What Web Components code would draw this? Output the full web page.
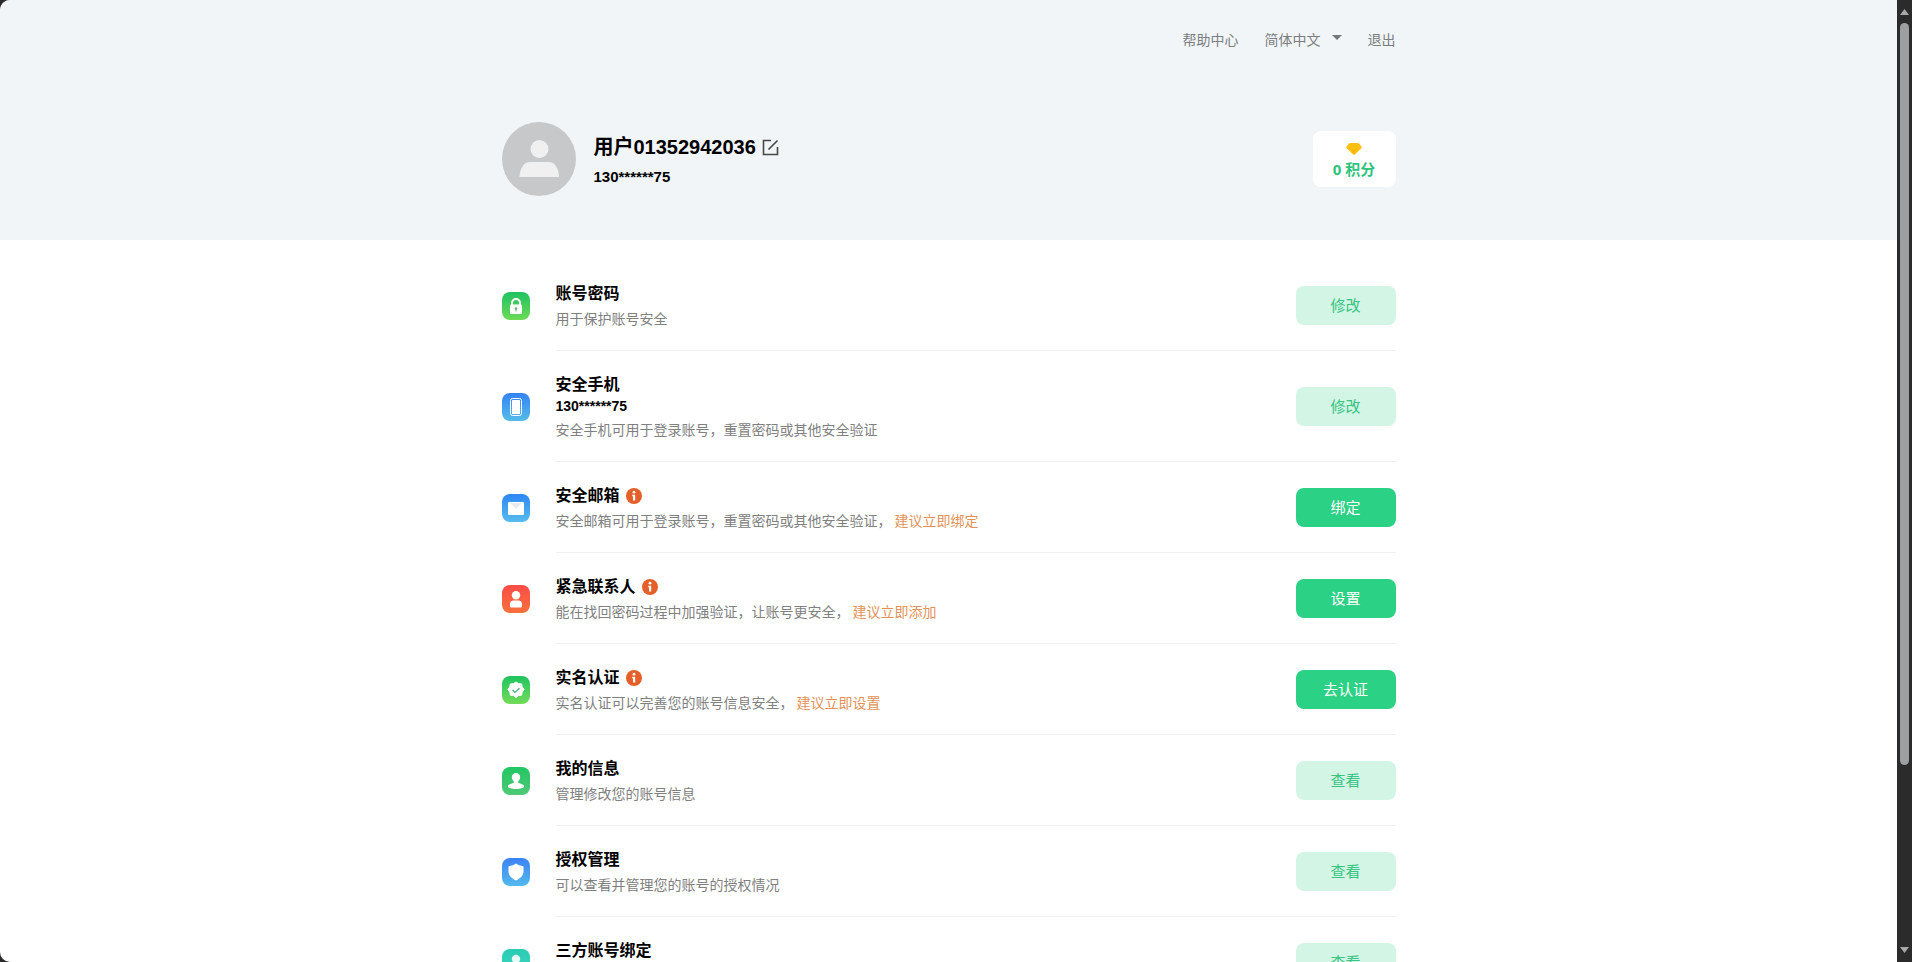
<!DOCTYPE html>
<html lang="zh-CN">
<head>
<meta charset="UTF-8">
<meta name="viewport" content="width=device-width, initial-scale=1">
<title>账号中心</title>
<style>
  html, body { height: 100%; }
  body {
    margin: 0;
    overflow: hidden;
    background: #2b2b2b;
    color: #000;
    font-family: "Liberation Sans", "Noto Sans CJK SC", sans-serif;
    font-size: 14px;
  }
</style>
</head>
<body>
<account-page>
  <account-header slot="header">
    <top-nav></top-nav>
    <user-profile name="用户01352942036" phone="130******75" points="0"></user-profile>
  </account-header>

  <setting-row icon="lock" heading="账号密码" action="修改">用于保护账号安全</setting-row>
  <setting-row icon="phone" heading="安全手机" value="130******75" action="修改">安全手机可用于登录账号，重置密码或其他安全验证</setting-row>
  <setting-row icon="mail" heading="安全邮箱" action="绑定" hint="建议立即绑定" primary>安全邮箱可用于登录账号，重置密码或其他安全验证，</setting-row>
  <setting-row icon="contact" heading="紧急联系人" action="设置" hint="建议立即添加" primary>能在找回密码过程中加强验证，让账号更安全，</setting-row>
  <setting-row icon="verify" heading="实名认证" action="去认证" hint="建议立即设置" primary>实名认证可以完善您的账号信息安全，</setting-row>
  <setting-row icon="profile" heading="我的信息" action="查看">管理修改您的账号信息</setting-row>
  <setting-row icon="shield" heading="授权管理" action="查看">可以查看并管理您的账号的授权情况</setting-row>
  <setting-row icon="link" heading="三方账号绑定" action="查看"></setting-row>
</account-page>

<script>
class AccountPage extends HTMLElement {
  constructor() {
    super();
    this.attachShadow({ mode: 'open' });
    this.shadowRoot.innerHTML = `
      <style>
        :host { display: flex; height: 100vh; }
        .view {
          flex: 1;
          min-width: 0;
          overflow: hidden;
          background: #fff;
          border-radius: 10px 0 0 10px;
        }
        main {
          max-width: 894px;
          margin: 0 auto;
          padding-top: 20px;
        }
      </style>
      <div class="view">
        <slot name="header"></slot>
        <main><slot></slot></main>
      </div>
      <scroll-rail></scroll-rail>
    `;
  }
}

class AccountHeader extends HTMLElement {
  constructor() {
    super();
    this.attachShadow({ mode: 'open' });
    this.shadowRoot.innerHTML = `
      <style>
        :host { display: block; background: #f1f5f8; }
        header { max-width: 894px; margin: 0 auto; }
      </style>
      <header><slot></slot></header>
    `;
  }
}

class TopNav extends HTMLElement {
  constructor() {
    super();
    this.attachShadow({ mode: 'open' });
    this.shadowRoot.innerHTML = `
      <style>
        :host { display: block; color: #7b7e80; }
        nav {
          display: flex;
          justify-content: flex-end;
          align-items: center;
          gap: 26px;
          height: 80px;
          line-height: 20px;
        }
        a { color: inherit; text-decoration: none; }
        .lang { display: grid; align-items: center; }
        .lang > * { grid-area: 1 / 1; }
        .lang svg { justify-self: end; pointer-events: none; margin-bottom: 5px; }
        select {
          appearance: none;
          border: 0;
          margin: 0;
          padding: 0 21px 0 0;
          background: none;
          color: inherit;
          font: inherit;
          line-height: 20px;
        }
      </style>
      <nav>
        <a href="#help">帮助中心</a>
        <label class="lang">
          <select aria-label="语言"><option>简体中文</option></select>
          <svg width="10" height="5" viewBox="0 0 10 5"><path d="M0 0h10L5 5z" fill="#73787b"/></svg>
        </label>
        <a href="#logout">退出</a>
      </nav>
    `;
  }
}

class UserProfile extends HTMLElement {
  constructor() {
    super();
    this.attachShadow({ mode: 'open' });
  }

  connectedCallback() {
    const name = this.getAttribute('name') || '';
    const phone = this.getAttribute('phone') || '';
    const points = this.getAttribute('points') || '0';

    this.shadowRoot.innerHTML = `
      <style>
        :host {
          display: flex;
          align-items: center;
          gap: 18px;
          padding: 42px 0 44px;
        }
        .avatar { flex: none; display: block; }
        .info { flex: 1; display: flex; flex-direction: column; gap: 6px; padding-top: 2px; }
        h1 {
          display: flex;
          align-items: center;
          gap: 6px;
          margin: 0;
          font-size: 20px;
          line-height: 28px;
        }
        h1 button { display: flex; padding: 0; border: 0; background: none; cursor: pointer; }
        .phone { font-size: 15px; font-weight: bold; line-height: 20px; }
        .points {
          display: flex;
          flex-direction: column;
          align-items: center;
          gap: 4px;
          box-sizing: border-box;
          width: 83px;
          padding: 12px 0 8px;
          border-radius: 8px;
          background: #fff;
          color: #2fc47e;
          font-family: "Open Sans", "Noto Sans CJK SC", sans-serif;
          font-size: 15px;
          font-weight: bold;
          line-height: 20px;
        }
      </style>
      <svg class="avatar" width="74" height="74" viewBox="0 0 74 74">
        <circle cx="37" cy="37" r="37" fill="#c6c8c9"/>
        <circle cx="37.500" cy="27" r="9" fill="#f0f0f0"/>
        <path d="M17.500 55C18 46 22 40 28 40H47C53 40 56.500 46 57 55Z" fill="#f0f0f0"/>
      </svg>
      <div class="info">
        <h1>
          <span>${name}</span>
          <button type="button" aria-label="编辑">
            <svg width="17" height="17" viewBox="0 0 17 17" fill="none" stroke="#454845" stroke-width="1.600">
              <path d="M9 1.500H1.500V15.500H15.500V8M6.500 10.500L15.500 1.500"/>
            </svg>
          </button>
        </h1>
        <div class="phone">${phone}</div>
      </div>
      <div class="points">
        <svg width="16" height="12" viewBox="0 0 16 12">
          <path d="M4.200 0H11.800Q12.600 0 13.200.7L15.500 3.600Q16 4.500 15.300 5.300L9.200 11.300Q8 12.300 6.800 11.300L.7 5.300Q0 4.500.5 3.600L2.800.7Q3.400 0 4.200 0Z" fill="#fdc010"/>
          <path d="M4.500 4.500L8 7.500L11.500 4.500L8 11Z" fill="#f8b40a"/>
        </svg>
        <span>${points} 积分</span>
      </div>
    `;
  }
}

// Glyph and tile gradient for each kind of setting
const ICONS = {
  lock: {
    from: '#1fc262', to: '#6bdc55',
    glyph: `<path d="M10 13.500V11a4 4 0 0 1 8 0v2.500" fill="none" stroke="#fff" stroke-width="2"/>
      <rect x="8" y="12.500" width="12" height="9.500" rx="1.200" fill="#fff"/>
      <circle cx="14" cy="16.500" r="1.200" fill="#52b978"/><path d="M13.500 17h1v2.500h-1z" fill="#52b978"/>`
  },
  phone: {
    from: '#3384f5', to: '#56bbe9',
    glyph: `<rect x="8.500" y="5.500" width="11" height="17" rx="2" fill="none" stroke="#fff" stroke-width="1"/>
      <rect x="10" y="7" width="8" height="14" rx=".5" fill="#fff"/>`
  },
  mail: {
    from: '#2f86f5', to: '#56bcec',
    glyph: `<rect x="6" y="8" width="16" height="13" rx="1" fill="#fff"/>
      <path d="M8 9h12l-5 5q-1 1-2 0z" fill="#e6ebf0"/>`
  },
  contact: {
    from: '#fb4c48', to: '#f9703a',
    glyph: `<circle cx="14" cy="10.200" r="4.200" fill="#fff"/>
      <path d="M11.500 15.500h5q3.500 0 3.500 3.500v2.200q0 1.300-1.300 1.300H9.300Q8 22.500 8 21.200V19q0-3.500 3.500-3.500z" fill="#fff"/>`
  },
  verify: {
    from: '#1fc35f', to: '#72dc5a',
    glyph: `<path d="M14 6l2.600 1.600 3.100.3.500 3 1.800 2.600-1.800 2.600-.5 3.100-3.100.4L14 21.500l-2.600-1.900-3.100-.4-.5-3.100L6 13.500l1.800-2.600.5-3 3.100-.3z" fill="#fff" stroke="#fff" stroke-linejoin="round"/>
      <path d="M10.500 14l2.500 2.500 4.500-4.200" fill="none" stroke="#4aa879" stroke-width="1.200"/>`
  },
  profile: {
    from: '#20c663', to: '#50c875',
    glyph: `<path d="M14 6c2.600 0 4.200 1.700 4.200 4 0 1.700-.7 3-1.700 4-.6.700-.5 1.700.3 2l3.300 1.200c1.300.5 1.900 1.200 1.900 2.300 0 1.500-3.500 2.500-8 2.500s-8-1-8-2.500c0-1.100.6-1.800 1.900-2.300l3.300-1.200c.8-.3.900-1.300.3-2-1-1-1.700-2.300-1.700-4 0-2.300 1.600-4 4.200-4z" fill="#fff"/>`
  },
  shield: {
    from: '#3c82f6', to: '#53b9ed',
    glyph: `<path d="M14 5.500q2.800 2.300 6.500 2.500 1 0 1 1v4.500c0 4-3 7-7.500 9-4.500-2-7.500-5-7.500-9V9q0-1 1-1Q11.200 7.800 14 5.500z" fill="#fff"/>`
  },
  link: {
    from: '#28cbb2', to: '#42d7c2',
    glyph: `<circle cx="14" cy="10" r="4.200" fill="#e7fbf7"/>
      <path d="M7 21c0-4 2-6 5-6h4c3 0 5 2 5 6z" fill="#e7fbf7"/>`
  }
};

class SettingIcon extends HTMLElement {
  constructor() {
    super();
    this.attachShadow({ mode: 'open' });
  }

  connectedCallback() {
    const icon = ICONS[this.getAttribute('name')];
    if (!icon) return;

    this.shadowRoot.innerHTML = `
      <style>
        :host {
          display: block;
          width: 28px;
          height: 28px;
          border-radius: 8px;
          background: linear-gradient(${icon.from}, ${icon.to});
        }
        svg { display: block; }
      </style>
      <svg width="28" height="28" viewBox="0 0 28 28">${icon.glyph}</svg>
    `;
  }
}

class SettingRow extends HTMLElement {
  constructor() {
    super();
    this.attachShadow({ mode: 'open' });
  }

  connectedCallback() {
    const heading = this.getAttribute('heading') || '';
    const value = this.getAttribute('value');
    const hint = this.getAttribute('hint');
    const action = this.getAttribute('action') || '';

    this.shadowRoot.innerHTML = `
      <style>
        :host { display: flex; align-items: center; gap: 26px; }
        setting-icon { flex: none; }
        .body {
          flex: 1;
          display: flex;
          align-items: center;
          justify-content: space-between;
          border-bottom: 1px solid #eff1f2;
        }
        .text { padding: 22px 0 19px; }
        h2 {
          display: flex;
          align-items: center;
          gap: 6px;
          margin: 0;
          font-size: 16px;
          line-height: 24px;
        }
        .value { padding-bottom: 2px; font-weight: bold; line-height: 18px; }
        p { min-height: 24px; margin: 1px 0 0; color: #808080; line-height: 24px; }
        .hint { margin-left: 3px; color: #e39257; }
        button {
          flex: none;
          width: 100px;
          height: 39px;
          padding: 0 0 2px;
          border: 0;
          border-radius: 8px;
          background: #d3f5e5;
          color: #37c382;
          font: inherit;
          font-size: 15px;
          cursor: pointer;
        }
        :host([primary]) button { background: #2bd184; color: #fff; }
      </style>
      <setting-icon name="${this.getAttribute('icon')}"></setting-icon>
      <div class="body">
        <div class="text">
          <h2>
            <span>${heading}</span>
            ${hint ? `<svg width="16" height="16" viewBox="0 0 16 16">
              <circle cx="8" cy="8" r="8" fill="#e45f29"/>
              <circle cx="8" cy="4.200" r="1.400" fill="#fff"/>
              <path d="M6.200 6.800h3v5.700H7V8.200h-.8z" fill="#fff"/>
            </svg>` : ''}
          </h2>
          ${value ? `<div class="value">${value}</div>` : ''}
          <p><slot></slot>${hint ? `<span class="hint">${hint}</span>` : ''}</p>
        </div>
        <button type="button">${action}</button>
      </div>
    `;
  }
}

// Dark scroll bar at the right edge of the window
class ScrollRail extends HTMLElement {
  constructor() {
    super();
    this.attachShadow({ mode: 'open' });
    this.shadowRoot.innerHTML = `
      <style>
        :host {
          display: flex;
          flex-direction: column;
          align-items: center;
          flex: none;
          box-sizing: border-box;
          width: 15px;
          padding: 9px 0;
          background: #2b2b2b;
        }
        svg { flex: none; display: block; }
        .track { flex: 1; padding: 8px 0; }
        .thumb { width: 9px; height: 81%; border-radius: 5px; background: #9d9fa0; }
      </style>
      <svg width="9" height="6" viewBox="0 0 9 6"><path d="M0 6L4.500 0L9 6z" fill="#a8a8a8"/></svg>
      <div class="track"><div class="thumb"></div></div>
      <svg width="9" height="6" viewBox="0 0 9 6"><path d="M0 0h9L4.500 6z" fill="#a8a8a8"/></svg>
    `;
  }
}

customElements.define('scroll-rail', ScrollRail);
customElements.define('setting-icon', SettingIcon);
customElements.define('setting-row', SettingRow);
customElements.define('user-profile', UserProfile);
customElements.define('top-nav', TopNav);
customElements.define('account-header', AccountHeader);
customElements.define('account-page', AccountPage);
</script>
</body>
</html>
